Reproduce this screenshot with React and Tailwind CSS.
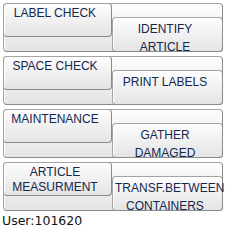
import React from "react";

const rows = [
  { left: ["LABEL CHECK"], right: ["IDENTIFY", "ARTICLE"] },
  { left: ["SPACE CHECK"], right: ["PRINT LABELS"] },
  { left: ["MAINTENANCE"], right: ["GATHER", "DAMAGED"] },
  { left: ["ARTICLE", "MEASURMENT"], right: ["TRANSF.BETWEEN", "CONTAINERS"] },
];

const btn =
  "rounded-[4px] border border-[#a3a3a3] border-r-[#8a8a8a] border-b-[#8a8a8a] bg-gradient-to-b from-[#fdfdfd] to-[#e4e4e4] shadow-[inset_1px_1px_0_#ffffff]";

export default function App() {
  return (
    <div
      className="w-[242px] h-[252px] bg-white"
      style={{ fontFamily: '"Liberation Sans", Arial, sans-serif' }}
    >
      <div className="flex flex-col gap-[4px] pl-[3px] pt-[3px]">
        {rows.map((r, i) => (
          <div
            key={i}
            className="grid grid-cols-[109px_111px] grid-rows-[14px_20px_15px]"
          >
            <div className={`${btn} col-start-1 col-end-3 row-start-1 row-end-4`} />
            <div
              className={`${btn} col-start-1 col-end-2 row-start-1 row-end-3 z-10 flex flex-col items-center pt-[2px] pr-[5px] text-[12px] leading-[15px] text-[#13284f]`}
            >
              {r.left.map((t) => (
                <span key={t} className="whitespace-nowrap">
                  {t}
                </span>
              ))}
            </div>
            <div
              className={`${btn} col-start-2 col-end-3 row-start-2 row-end-4 z-10 pt-[2px] pl-[2px] pr-[7px] text-center text-[12px] leading-[18px] text-[#13284f]`}
            >
              <div className="h-full overflow-x-visible overflow-y-clip">
                {r.right.map((t) => (
                  <div key={t} className="whitespace-nowrap">
                    {t}
                  </div>
                ))}
              </div>
            </div>
          </div>
        ))}
      </div>
      <div
        className="pl-[2px] pt-[3px] text-[12.5px] leading-[14px] text-[#111]"
        style={{ fontFamily: '"DejaVu Sans", Verdana, sans-serif' }}
      >
        User:101620
      </div>
    </div>
  );
}
